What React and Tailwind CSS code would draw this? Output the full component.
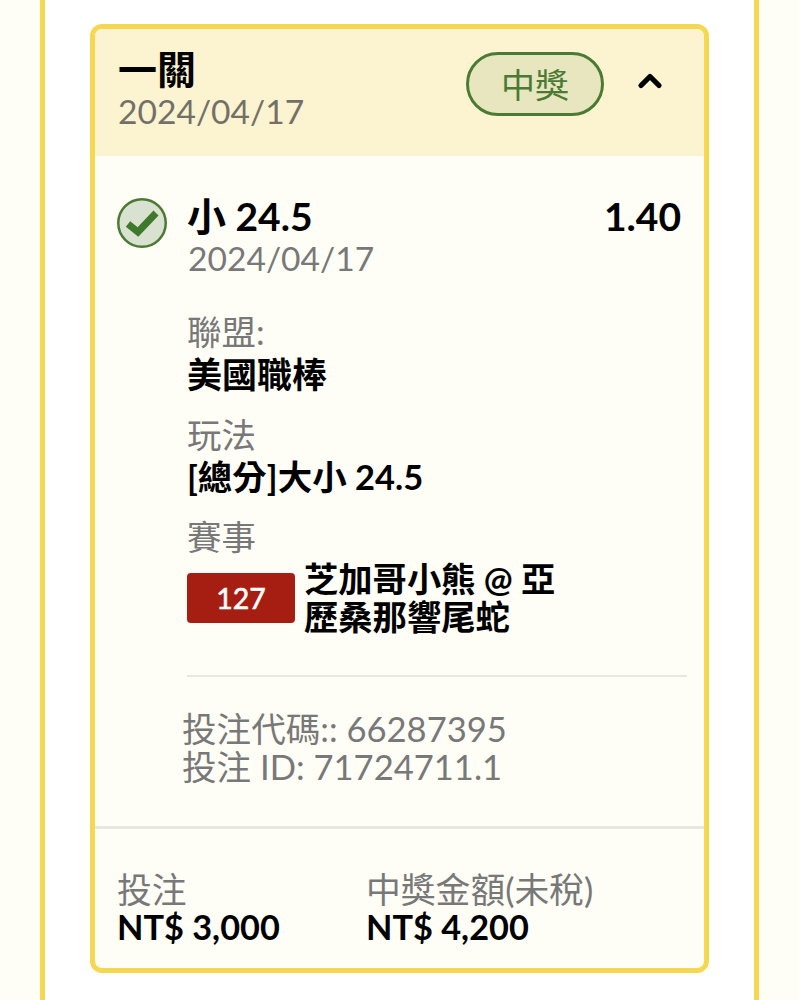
import React from 'react';
import { ChevronUp } from 'lucide-react';

const FONT = "font-['Lato','Noto_Sans_CJK_TC',sans-serif]";

const Detail = ({ label, children }) => (
  <div className="flex flex-col">
    <div className="text-[34.5px] leading-[42px] text-[#787878]">{label}</div>
    {children}
  </div>
);

const Amount = ({ label, value, className }) => (
  <div className={className}>
    <div className="text-[34.8px] leading-[36px] text-[#787878]">{label}</div>
    <div className="text-[34.3px] leading-[37px] font-bold text-black">{value}</div>
  </div>
);

const WonMark = () => (
  <svg viewBox="0 0 50 50" className="mt-[3px] h-[50px] w-[50px] shrink-0">
    <circle cx="25" cy="25" r="23.75" fill="#d9e2d0" stroke="#4b7a34" strokeWidth="2.5" />
    <polyline points="11,26 21,34 39,15" fill="none" stroke="#3f7a2c" strokeWidth="7" />
  </svg>
);

export default function App() {
  return (
    <div className={`${FONT} h-[1000px] overflow-hidden bg-[#fefef6] px-[40px]`}>
      <div className="h-full border-x-[5px] border-[#f5d750] bg-white px-[45px] pt-[24px]">
        <div className="h-[949px] overflow-hidden rounded-[12px] border-[5px] border-[#f5d750] bg-[#fefef6]">
          {/* Header */}
          <div className="flex h-[127px] items-start justify-between bg-[#fcf3d0] pl-[23px] pr-[36px] pt-[18px]">
            <div>
              <div className="text-[39px] leading-[45px] font-bold text-black">一關</div>
              <div className="text-[33.6px] leading-[38px] text-[#737068]">2024/04/17</div>
            </div>
            <div className="flex items-center gap-[28px] pt-[5px]">
              <div className="flex h-[64px] w-[138px] items-center justify-center rounded-full border-[3px] border-[#4b7a34] bg-[#e8e6bf] text-[34px] text-[#4b7a34]">
                中獎
              </div>
              <ChevronUp size={36} strokeWidth={3.5} className="mb-[6px] text-black" />
            </div>
          </div>

          {/* Leg */}
          <div className="flex gap-[20px] pl-[22px] pr-[23px] pt-[39px]">
            <WonMark />
            <div className="flex-1">
              <div className="flex items-start justify-between">
                <div>
                  <div className="text-[39px] leading-[43px] font-bold text-black">小 24.5</div>
                  <div className="pl-[1px] text-[33.6px] leading-[40px] text-[#787878]">2024/04/17</div>
                </div>
                <div className="text-[39px] leading-[43px] font-bold text-black">1.40</div>
              </div>

              <div className="mt-[33px] flex flex-col gap-[19px] pb-[39px]">
                <Detail label="聯盟:">
                  <div className="text-[35px] leading-[42px] font-bold text-black">美國職棒</div>
                </Detail>
                <Detail label="玩法">
                  <div className="text-[34.5px] leading-[42px] font-bold text-black">[總分]大小 24.5</div>
                </Detail>
                <div className="-mt-[1px] flex flex-col">
                  <div className="text-[34.5px] leading-[42px] text-[#787878]">賽事</div>
                  <div className="flex items-start gap-[9px]">
                    <div className="mt-[15px] flex h-[50px] w-[108px] shrink-0 items-center justify-center rounded-[4px] bg-[#a61e12] text-[28.5px] text-white [-webkit-text-stroke:0.6px_white]">
                      127
                    </div>
                    <div className="mt-[2px] w-[260px] text-[34.3px] leading-[38px] font-bold text-black">芝加哥小熊 @ 亞歷桑那響尾蛇</div>
                  </div>
                </div>
              </div>

              <div className="-mr-[6px] h-[2px] bg-[#e8e8e2]" />
              <div className="-ml-[5px] pt-[33px]">
                <div className="text-[34.6px] leading-[38px] text-[#787878]">投注代碼:: 66287395</div>
                <div className="text-[34.6px] leading-[38px] text-[#787878]">投注 ID: 71724711.1</div>
              </div>
            </div>
          </div>

          {/* Totals */}
          <div className="mt-[40px] flex border-t-[3px] border-[#e8e8e2] pl-[22px] pt-[43px]">
            <Amount label="投注" value="NT$ 3,000" className="w-[249px]" />
            <Amount label="中獎金額(未稅)" value="NT$ 4,200" />
          </div>
        </div>
      </div>
    </div>
  );
}
